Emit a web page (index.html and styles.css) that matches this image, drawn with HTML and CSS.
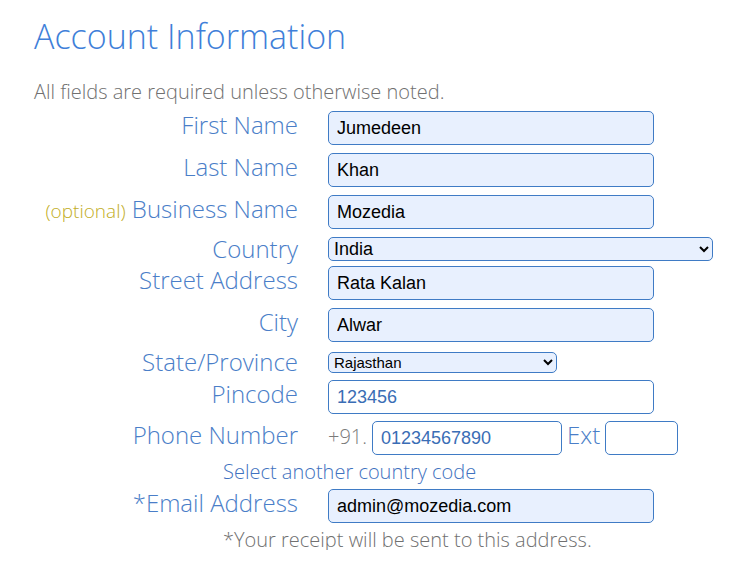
FILE: index.html
```html
<!DOCTYPE html>
<html lang="en">
<head>
<meta charset="utf-8">
<title>Account Information</title>
<link rel="stylesheet" href="styles.css">
</head>
<body>
<div class="page">
  <h1 class="title">Account Information</h1>
  <p class="hint">All fields are required unless otherwise noted.</p>
  <div class="form">
    <div class="row">
      <label class="lbl">First Name</label>
      <input class="field filled" type="text" value="Jumedeen">
    </div>
    <div class="row">
      <label class="lbl">Last Name</label>
      <input class="field filled" type="text" value="Khan">
    </div>
    <div class="row">
      <label class="lbl"><span class="opt">(optional)</span> Business Name</label>
      <input class="field filled" type="text" value="Mozedia">
    </div>
    <div class="row row-country">
      <label class="lbl">Country</label>
      <select class="sel sel-country"><option>India</option></select>
    </div>
    <div class="row">
      <label class="lbl">Street Address</label>
      <input class="field filled" type="text" value="Rata Kalan">
    </div>
    <div class="row">
      <label class="lbl">City</label>
      <input class="field filled" type="text" value="Alwar">
    </div>
    <div class="row row-state">
      <label class="lbl">State/Province</label>
      <select class="sel sel-state"><option>Rajasthan</option></select>
    </div>
    <div class="row row-pin">
      <label class="lbl">Pincode</label>
      <input class="field plain" type="text" value="123456">
    </div>
    <div class="row row-phone">
      <label class="lbl">Phone Number</label>
      <span class="prefix">+91.</span>
      <input class="field plain phone" type="text" value="01234567890">
      <span class="ext-lbl">Ext</span>
      <input class="field plain ext" type="text" value="">
    </div>
    <div class="note note-link">Select another country code</div>
    <div class="row row-email">
      <label class="lbl">*Email Address</label>
      <input class="field filled" type="text" value="admin@mozedia.com">
    </div>
    <div class="note note-gray">*Your receipt will be sent to this address.</div>
  </div>
</div>
</body>
</html>
```

FILE: styles.css
```css
html, body {
  margin: 0;
  padding: 0;
  background: #ffffff;
}

.page {
  padding: 0 0 0 34px;
  font-family: "Open Sans", "Noto Sans", sans-serif;
  font-weight: 300;
}

.title {
  margin: 0;
  padding-top: 12px;
  font-size: 34px;
  font-weight: 300;
  line-height: 48px;
  color: #3f7fd9;
}

.hint {
  margin: 20px 0 0 0;
  font-size: 20px;
  line-height: 24px;
  color: #707070;
}

.form {
  display: flex;
  flex-direction: column;
  margin-top: 7px;
}

.row {
  display: flex;
  align-items: baseline;
  margin-bottom: 8px;
}

.row-country {
  align-items: center;
  margin-bottom: 5px;
}

.row-state {
  align-items: center;
  margin-bottom: 6px;
}

.row-pin,
.row-phone,
.row-email {
  margin-bottom: 7px;
}

.lbl {
  flex: 0 0 264px;
  margin-right: 30px;
  text-align: right;
  font-size: 24px;
  line-height: 24px;
  color: #4a7ec8;
}

.opt {
  font-size: 19px;
  color: #c2ad1e;
}

.field {
  box-sizing: border-box;
  width: 326px;
  height: 34px;
  padding: 0 8px;
  border: 1px solid #3f7bc5;
  border-radius: 5px;
  font-family: "Liberation Sans", Arial, sans-serif;
  font-size: 18px;
  outline: none;
}

.filled {
  background: #e8f0fe;
  color: #000000;
}

.plain {
  background: #ffffff;
  color: #3a6db5;
}

.sel {
  box-sizing: border-box;
  border: 1px solid #3f7bc5;
  border-radius: 5px;
  background: #e8f0fe;
  color: #000000;
  font-family: "Liberation Sans", Arial, sans-serif;
}

.sel-country {
  width: 385px;
  height: 24px;
  font-size: 18px;
  padding: 0 1px;
}

.sel-state {
  width: 229px;
  height: 21px;
  font-size: 15px;
  padding: 0 1px;
}

.prefix {
  margin-right: 5px;
  font-size: 20px;
  line-height: 24px;
  color: #7a7a7a;
}

.phone {
  width: 190px;
}

.ext-lbl {
  margin: 0 5px 0 5px;
  font-size: 24px;
  line-height: 24px;
  color: #4a7ec8;
}

.ext {
  width: 73px;
}

.note {
  margin-left: 189px;
  font-size: 20px;
  line-height: 20px;
}

.note-link {
  margin-bottom: 7px;
  color: #3f72c0;
}

.note-gray {
  color: #707070;
}
```
